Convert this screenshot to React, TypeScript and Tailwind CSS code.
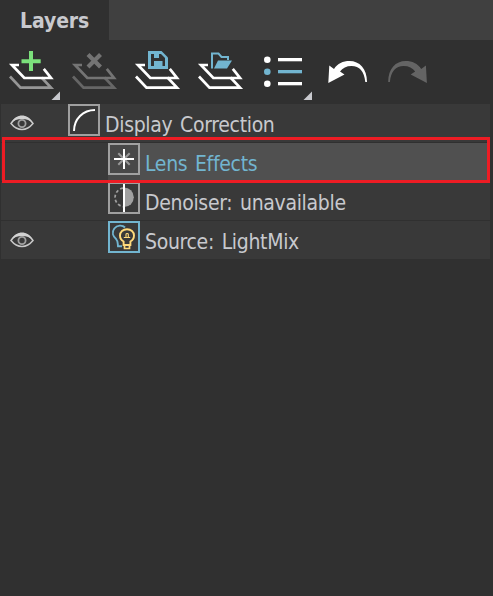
import type { ReactNode } from "react";

const FONT = "font-['DejaVu_Sans_Condensed','DejaVu_Sans','Noto_Sans',sans-serif]";

function ToolButton({ label, children }: { label: string; children: ReactNode }) {
  return (
    <button aria-label={label} className="block h-16 w-[63px] shrink-0">
      <svg width="63" height="64" viewBox="0 0 63 64" fill="none" className="block">
        {children}
      </svg>
    </button>
  );
}

// two open sheets, shared by the first four buttons
function Sheets({ top, bottom }: { top: string; bottom: string }) {
  return (
    <g strokeWidth="2.7">
      <path d="M10 36.5L20.5 47.7H51L41.5 37.5" stroke={bottom} />
      <path d="M19 25H12L24.3 38H51L43.8 28.8" stroke={top} />
    </g>
  );
}

function UndoShape({ fill }: { fill: string }) {
  return (
    <path
      d="M13.3 43L14.3 25.5L19 29C22.5 23.5 28 21 34.5 21C44.5 21 52 28.5 52 42H50.3C49.3 31.5 44.5 26 36.5 26C31.5 26 27.5 28 25 31.5L29.5 34.5Z"
      fill={fill}
    />
  );
}

function Eye() {
  return (
    <svg width="24" height="16" viewBox="0 0 24 16" fill="none" className="block">
      <path d="M1 8.5C4.5 3.5 8 1.8 12 1.8S19.5 3.5 23 8.5C19.5 12.8 16 14.5 12 14.5S4.5 12.8 1 8.5Z" stroke="#c8c8c8" strokeWidth="1.5" />
      <path d="M0.5 8.5C4 2.5 8 0.5 12 0.5S20 2.5 23.5 8.5C20 5.2 16.5 3.9 12 3.9S4 5.2 0.5 8.5Z" fill="#d2d2d2" />
      <circle cx="12" cy="8.5" r="3.6" stroke="#a0a0a0" strokeWidth="1.8" />
    </svg>
  );
}

function CurveIcon() {
  return <path d="M6 27C6 15 15 6 27 6" stroke="#fff" strokeWidth="2" />;
}

function LensIcon() {
  return (
    <>
      <path d="M10.3 10.3L21.7 21.7M21.7 10.3L10.3 21.7" stroke="#999" strokeWidth="2" />
      <path d="M16 6V26M6 16H26" stroke="#fff" strokeWidth="2" />
    </>
  );
}

function DenoiserIcon() {
  return (
    <>
      <path d="M16 5.5A9.8 9.8 0 0 1 16 25.1Z" fill="#a0a0a0" />
      <path d="M15 6.2A9.3 9.3 0 0 0 15 24.6" stroke="#a0a0a0" strokeWidth="1.7" strokeDasharray="3 2.2" />
      <path d="M16 2V30" stroke="#fff" strokeWidth="2" />
    </>
  );
}

function LightMixIcon() {
  return (
    <>
      <path d="M17 6.5C14.5 3.8 9 4 6.3 7.5C3.5 11.3 5 15.5 8.3 18.3C10 20 9.6 22 10 25.3H14" stroke="#72b5d0" strokeWidth="1.9" />
      <path d="M15.6 24V20.5C12.8 18.8 12 16.8 12 14.5C12 10.800 15 8.200 19 8.200S26 10.800 26 14.500C26 16.800 25.200 18.800 22.400 20.500V24Z" fill="#393939" stroke="#ffda7b" strokeWidth="1.9" />
      <path d="M16.5 24V27.5H21.5V24" stroke="#ffda7b" strokeWidth="1.7" />
      <path d="M15.800 16.500H22.200M18 16V13.300C18 12.200 20.300 12.200 20.300 13.300V16" stroke="#ffda7b" strokeWidth="1.100" />
    </>
  );
}

type Layer = {
  name: string;
  icon: ReactNode;
  visible?: boolean;
  root?: boolean;
  selected?: boolean;
  accent?: boolean;
};

const layers: Layer[] = [
  { name: "Display Correction", icon: <CurveIcon />, visible: true, root: true },
  { name: "Lens Effects", icon: <LensIcon />, selected: true },
  { name: "Denoiser: unavailable", icon: <DenoiserIcon /> },
  { name: "Source: LightMix", icon: <LightMixIcon />, visible: true, accent: true },
];

function LayerRow({ layer }: { layer: Layer }) {
  return (
    <div className="relative flex h-[39px] border-b border-[#303030] bg-[#393939]">
      <div className={`flex shrink-0 pl-[9px] pt-[11px] ${layer.root ? "w-[67px]" : "w-[107px]"}`}>
        {layer.visible && <Eye />}
      </div>
      <div className={`w-8 shrink-0 ${layer.selected ? "bg-[#484848]" : ""}`}>
        <svg width="32" height="32" viewBox="0 0 32 32" fill="none" className="block">
          <rect x="1" y="1" width="30" height="30" fill={layer.selected ? "#484848" : "#393939"} stroke={layer.accent ? "#72b5d0" : "#a0a0a0"} strokeWidth="2" />
          {layer.icon}
        </svg>
      </div>
      <div
        className={`flex-1 whitespace-nowrap pl-[5px] pt-[7px] text-[21px] leading-[28px] tracking-[-0.32px] [word-spacing:2px] ${
          layer.selected ? "bg-[#505050] text-[#72b5d0]" : "text-[#c8c9ce]"
        }`}
      >
        {layer.name}
      </div>
      {layer.selected && (
        <div className="pointer-events-none absolute -top-1.5 right-0 z-10 h-[46px] w-[488px] border-[3px] border-[#ed1c24]" />
      )}
    </div>
  );
}

export default function App() {
  return (
    <div className={`flex h-[596px] w-[493px] flex-col overflow-hidden bg-[#303030] ${FONT}`}>
      <div className="flex h-10 bg-[#404040]">
        <div className="w-[109px] bg-[#303030] pl-5 pt-[7px] text-[21px] font-bold leading-[28px] tracking-[-0.1px] text-[#c8c9ce]">
          Layers
        </div>
      </div>

      <div className="flex h-16">
        <ToolButton label="Add layer">
          <Sheets top="#fff" bottom="#969696" />
          <path d="M21.5 21.2H40.7M31 11V31" stroke="#7be07b" strokeWidth="4" />
          <path d="M60 51.5V60H51.5Z" fill="#c8c9ce" />
        </ToolButton>
        <ToolButton label="Delete layer">
          <Sheets top="#747474" bottom="#666" />
          <path d="M25 14.5L37.5 27M37.5 14.5L25 27" stroke="#747474" strokeWidth="4.2" />
        </ToolButton>
        <ToolButton label="Save layers">
          <Sheets top="#fff" bottom="#fff" />
          <path d="M22 11H35.5L42 17.5V29H22Z" fill="#72b5d0" />
          <path d="M25 14H28V18H33V14H35L39 18V26H36.500V21H28V26H25Z" fill="#303030" />
        </ToolButton>
        <ToolButton label="Load layers">
          <Sheets top="#fff" bottom="#fff" />
          <path d="M23 28.5V13.5H29.5L32.5 17H39V20" stroke="#72b5d0" strokeWidth="2" />
          <path d="M29 20.5H43L38 28.5H25Z" fill="#72b5d0" />
        </ToolButton>
        <ToolButton label="Layer options">
          <g fill="#fff">
            <circle cx="15.3" cy="19.7" r="3.3" />
            <circle cx="15.3" cy="43.7" r="3.3" />
            <rect x="26" y="18" width="24" height="3.3" />
            <rect x="26" y="42" width="24" height="3.3" />
          </g>
          <circle cx="15.3" cy="31.7" r="3.3" fill="#72b5d0" />
          <rect x="26" y="30" width="24" height="3.3" fill="#72b5d0" />
          <path d="M60 51.5V60H51.5Z" fill="#c8c9ce" />
        </ToolButton>
        <ToolButton label="Undo">
          <UndoShape fill="#fff" />
        </ToolButton>
        <ToolButton label="Redo">
          <g transform="translate(62.2 0) scale(-1 1)">
            <UndoShape fill="#646464" />
          </g>
        </ToolButton>
      </div>

      <div className="ml-px w-[489px]">
        {layers.map((layer) => (
          <LayerRow key={layer.name} layer={layer} />
        ))}
      </div>
    </div>
  );
}
